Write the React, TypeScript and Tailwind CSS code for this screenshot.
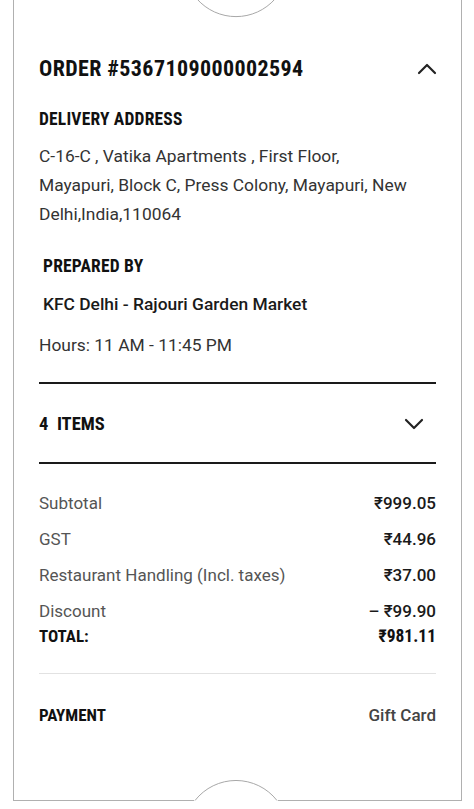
import React from 'react';
import { ChevronUp, ChevronDown } from 'lucide-react';

// condensed face for headings, Roboto for body copy
const cond = "font-['Roboto_Condensed',Roboto,sans-serif] font-stretch-condensed font-bold text-[#111]";

function Notch({ side }: { side: 'top' | 'bottom' }) {
  if (side === 'top') {
    return (
      <svg className="absolute left-[181px] -top-px" width="82" height="20" viewBox="0 0 82 20">
        <rect x="0" y="0" width="82" height="2" fill="#fff" />
        <path d="M2 0 A52 52 0 0 0 80 0" fill="#fff" stroke="#a8a8a8" strokeWidth="1" />
      </svg>
    );
  }
  return (
    <svg className="absolute left-[180px] -bottom-px" width="84" height="21" viewBox="0 0 84 21">
      <rect x="0" y="19" width="84" height="2" fill="#fff" />
      <path d="M1 20.5 A52 52 0 0 1 83 20.5" fill="#fff" stroke="#a8a8a8" strokeWidth="1" />
    </svg>
  );
}

function Row({ label, value }: { label: string; value: string }) {
  return (
    <div className="flex items-center justify-between leading-[24px]">
      <span className="text-[17px] text-[#555]">{label}</span>
      <span className="text-[17px] font-medium text-[#1a1a1a]">{value}</span>
    </div>
  );
}

export default function App() {
  return (
    <div className="h-[809px] overflow-hidden bg-white font-['Roboto','Noto_Sans',sans-serif]">
      <div className="relative ml-[13px] w-[449px] border-x border-b border-[#b0b0b0] px-[25px] pt-[57px] pb-[73px] text-[#222]">
        <Notch side="top" />

        {/* order header */}
        <div className="flex items-center justify-between leading-[24px]">
          <h1 className={`text-[22px] tracking-[0.4px] ${cond}`}>ORDER #5367109000002594</h1>
          <ChevronUp className="-my-1 mr-[-7px] h-8 w-8 text-[#222]" strokeWidth={1.6} />
        </div>

        <h2 className={`mt-[27px] text-[17.5px] leading-[22px] tracking-[0.2px] ${cond}`}>DELIVERY ADDRESS</h2>
        <p className="mt-3 text-[17.4px] leading-[29px] text-[#333]">
          C-16-C , Vatika Apartments , First Floor,
          <br />
          Mayapuri, Block C, Press Colony, Mayapuri, New
          <br />
          Delhi,India,110064
        </p>

        <h2 className={`mt-[26px] pl-1 text-[17.5px] leading-[22px] tracking-[0.2px] ${cond}`}>PREPARED BY</h2>
        <p className="mt-[15px] pl-1 text-[17.4px] font-medium leading-[24px] text-[#1a1a1a]">
          KFC Delhi - Rajouri Garden Market
        </p>
        <p className="mt-[17px] text-[17.4px] leading-[24px] text-[#333]">Hours: 11 AM - 11:45 PM</p>

        <div className="mt-[25px] h-[2px] bg-[#1a1a1a]" />

        {/* items */}
        <div className="flex items-center justify-between pt-[28px] pb-[26px] leading-[24px]">
          <h2 className={`text-[18.5px] ${cond}`}>4&nbsp; ITEMS</h2>
          <ChevronDown className="-my-1 mr-[6px] h-8 w-8 text-[#222]" strokeWidth={1.6} />
        </div>
        <div className="h-[2px] bg-[#1a1a1a]" />

        {/* totals */}
        <div className="mt-[27px] flex flex-col gap-3">
          <Row label="Subtotal" value="₹999.05" />
          <Row label="GST" value="₹44.96" />
          <Row label="Restaurant Handling (Incl. taxes)" value="₹37.00" />
          <Row label="Discount" value="– ₹99.90" />
        </div>
        <div className="mt-px flex items-center justify-between leading-[24px] text-[#111]">
          <span className={`text-[17px] ${cond}`}>TOTAL:</span>
          <span className={`text-[17.5px] ${cond}`}>₹981.11</span>
        </div>

        <div className="mt-[25px] h-px bg-[#e2e2e2]" />

        <div className="mt-[29px] flex items-center justify-between leading-[24px]">
          <span className={`text-[17px] ${cond}`}>PAYMENT</span>
          <span className="text-[17px] font-medium text-[#444]">Gift Card</span>
        </div>

        <Notch side="bottom" />
      </div>
    </div>
  );
}
